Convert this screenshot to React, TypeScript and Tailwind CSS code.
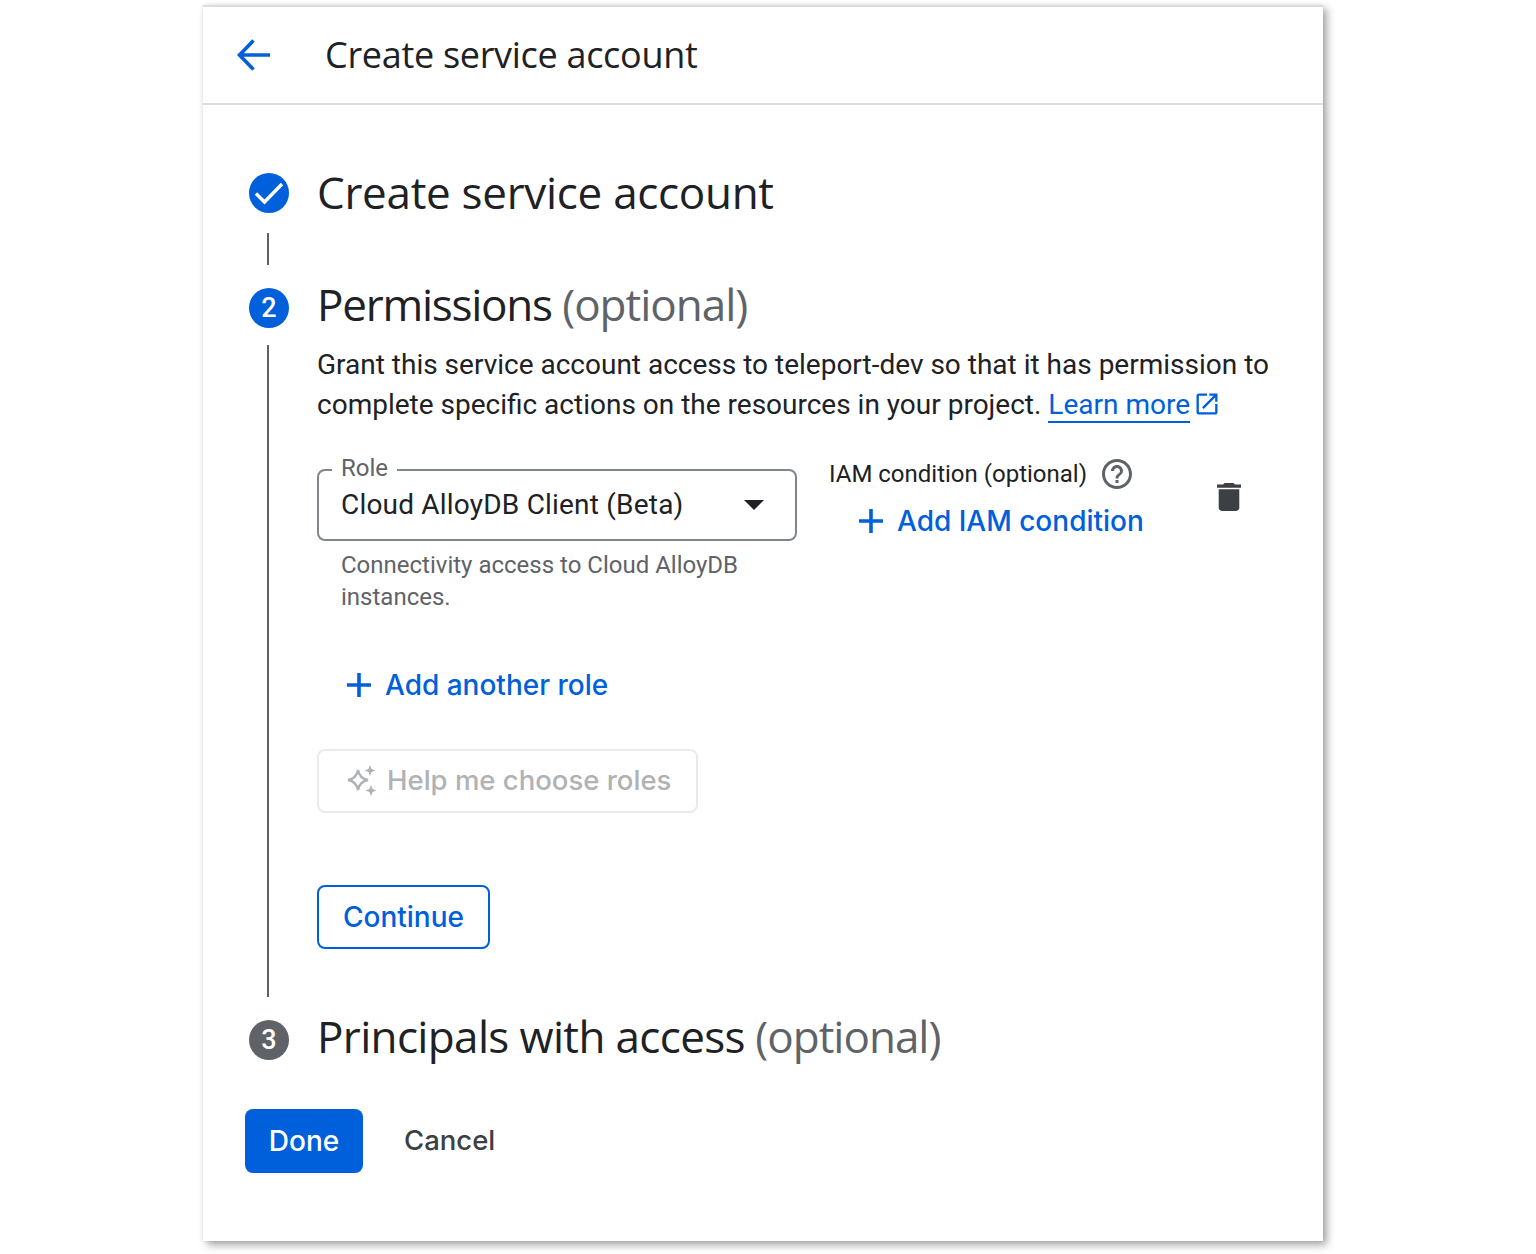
const BLUE = "#0060db";

function Plus() {
  return (
    <svg width="24" height="24" viewBox="0 0 24 24" className="shrink-0" fill={BLUE}>
      <path d="M10.2 0h3.600v10.200H24v3.600H13.800V24h-3.600V13.800H0v-3.600h10.200z" />
    </svg>
  );
}

function StepCircle({ children, color = "bg-[#0060db]" }: { children: React.ReactNode; color?: string }) {
  return (
    <div className={`w-10 h-10 rounded-full ${color} flex items-center justify-center text-white text-[27px] font-medium font-['Roboto',sans-serif] shrink-0`}>
      {children}
    </div>
  );
}

function StepTitle({ title, optional, className }: { title: string; optional?: boolean; className: string }) {
  return (
    <h2 className={`ml-[28px] text-[44px] leading-10 text-[#202124] font-['Open_Sans',sans-serif] whitespace-nowrap ${className}`}>
      {title}
      {optional && <span className="text-[#5f6368] tracking-[-1px]"> (optional)</span>}
    </h2>
  );
}

export default function App() {
  return (
    <div className="bg-white min-h-[1254px] pt-[5px] font-['Roboto',sans-serif]">
      <div className="ml-[203px] w-[1120px] h-[1236px] bg-white border-t-2 border-[#dadce0] shadow-[4px_4px_8px_rgba(0,0,0,0.35),0_0_4px_rgba(0,0,0,0.08)]">
        <header className="h-[98px] border-b-2 border-[#dadce0] flex items-center pl-[34px]">
          <svg width="34" height="32" viewBox="0 0 34 32" fill="none" stroke={BLUE} strokeWidth="3.6">
            <path d="M33 16H3M16.500 1.500 2.500 16l14 14.500" />
          </svg>
          <h1 className="ml-[54px] text-[36px] text-[#202124] font-['Open_Sans',sans-serif] tracking-[-0.3px]">Create service account</h1>
        </header>

        <div className="pl-[46px] pt-[68px]">
          <div className="flex items-center">
            <StepCircle>
              <svg width="32" height="32" viewBox="0 0 32 32" fill="none" stroke="#fff" strokeWidth="3.4">
                <path d="M3 16.500 11.500 25 29 7" />
              </svg>
            </StepCircle>
            <StepTitle title="Create service account" className="tracking-[-0.3px] -mt-[2px]" />
          </div>
          <div className="ml-[18px] mt-5 w-0.5 h-8 bg-[#5f6368]" />

          <div className="flex items-center mt-[23px]">
            <StepCircle>2</StepCircle>
            <StepTitle title="Permissions" optional className="tracking-[-1.25px] -mt-[8px]" />
          </div>

          <div className="ml-[18px] mt-[17px] border-l-2 border-[#5f6368] h-[652px] pl-[48px]">
            <p className="text-[28px] leading-10 text-[#202124] w-[960px]">
              Grant this service account access to teleport-dev so that it has permission to complete specific actions on the resources in your project.{" "}
              <a className="text-[#0060db] border-b-2 border-[#0060db]">Learn more</a>
              <svg width="28" height="28" viewBox="0 0 24 24" fill={BLUE} className="inline ml-[3px] -mt-1.5">
                <path d="M19 19H5V5h7V3H5c-1.110 0-2 .9-2 2v14c0 1.100.89 2 2 2h14c1.100 0 2-.9 2-2v-7h-2v7zM14 3v2h3.590l-9.830 9.830 1.410 1.410L19 6.410V10h2V3h-7z" />
              </svg>
            </p>

            <div className="flex mt-[44px]">
              <div className="w-[480px] shrink-0">
                <div className="relative h-[72px] border-2 border-[#80868b] rounded-lg flex items-center justify-between pl-[22px] pr-[31px]">
                  <span className="absolute -top-[19px] left-[13px] bg-white px-[9px] text-[24px] leading-8 text-[#5f6368]">Role</span>
                  <span className="text-[28px] text-[#202124] mt-[-1px] tracking-[0.2px]">Cloud AlloyDB Client (Beta)</span>
                  <span className="w-0 h-0 border-x-[10px] border-x-transparent border-t-[10px] border-t-[#202124]" />
                </div>
                <p className="mt-2 px-6 text-[24px] leading-8 text-[#5f6368]">Connectivity access to Cloud AlloyDB instances.</p>
              </div>

              <div className="ml-[32px] w-[388px] shrink-0 -mt-[13px]">
                <div className="flex items-center h-9">
                  <span className="text-[24px] text-[#202124]">IAM condition (optional)</span>
                  <svg width="36" height="36" viewBox="0 0 24 24" fill="#5f6368" className="ml-[12px]">
                    <path d="M11 18h2v-2h-2v2zm1-16C6.480 2 2 6.480 2 12s4.480 10 10 10 10-4.480 10-10S17.520 2 12 2zm0 18c-4.410 0-8-3.590-8-8s3.590-8 8-8 8 3.590 8 8-3.590 8-8 8zm0-14c-2.210 0-4 1.790-4 4h2c0-1.100.9-2 2-2s2 .9 2 2c0 2-3 1.750-3 5h2c0-2.250 3-2.500 3-5 0-2.210-1.790-4-4-4z" />
                  </svg>
                </div>
                <div className="flex items-center gap-[14px] ml-[30px] mt-[8px] text-[#0060db] text-[28px] font-medium font-['Inter',sans-serif]">
                  <Plus />
                  Add IAM condition
                </div>
              </div>

              <svg width="24" height="28" viewBox="5 3 14 18" preserveAspectRatio="none" fill="#3c4043" className="mt-[14px] shrink-0">
                <path d="M6 19c0 1.100.9 2 2 2h8c1.100 0 2-.9 2-2V7H6v12zM19 4h-3.500l-1-1h-5l-1 1H5v2h14V4z" />
              </svg>
            </div>

            <div className="flex items-center gap-[14px] ml-[30px] mt-[51px] text-[#0060db] text-[28px] font-medium font-['Inter',sans-serif]">
              <Plus />
              Add another role
            </div>

            <button className="mt-[43px] w-[381px] h-16 border-2 border-[#e8eaed] rounded-lg flex items-center pl-7 gap-[10px] text-[#b0b2b5] text-[27.5px] font-medium font-['Inter',sans-serif]">
              <svg width="30" height="32" viewBox="0 0 30 32" fill="#b0b2b5">
                <path d="M11 5Q12.500 13.500 21 15 12.500 16.500 11 25 9.500 16.500 1 15 9.500 13.500 11 5z" fill="none" stroke="#b0b2b5" strokeWidth="2.400" />
                <path d="M23 0l1.600 3.900L28.500 5.500l-3.900 1.600L23 11l-1.600-3.900-3.900-1.600 3.900-1.600zM24 20l1.600 3.900 3.900 1.600-3.900 1.600L24 31l-1.600-3.900-3.900-1.600 3.900-1.600z" />
              </svg>
              Help me choose roles
            </button>

            <button className="mt-[72px] block w-[173px] h-16 border-2 border-[#0060db] rounded-lg text-[#0060db] text-[28px] font-medium font-['Inter',sans-serif]">
              Continue
            </button>
          </div>

          <div className="flex items-center mt-[23px]">
            <StepCircle color="bg-[#5f6368]">3</StepCircle>
            <StepTitle title="Principals with access" optional className="tracking-[-0.65px] -mt-[8px]" />
          </div>

          <div className="flex items-center mt-[49px] -ml-1">
            <button className="w-[118px] h-16 rounded-lg bg-[#0060db] text-white text-[28px] font-medium font-['Inter',sans-serif]">
              Done
            </button>
            <button className="ml-[41px] text-[#3c4043] text-[27.5px] font-medium font-['Inter',sans-serif]">
              Cancel
            </button>
          </div>
        </div>
      </div>
    </div>
  );
}
